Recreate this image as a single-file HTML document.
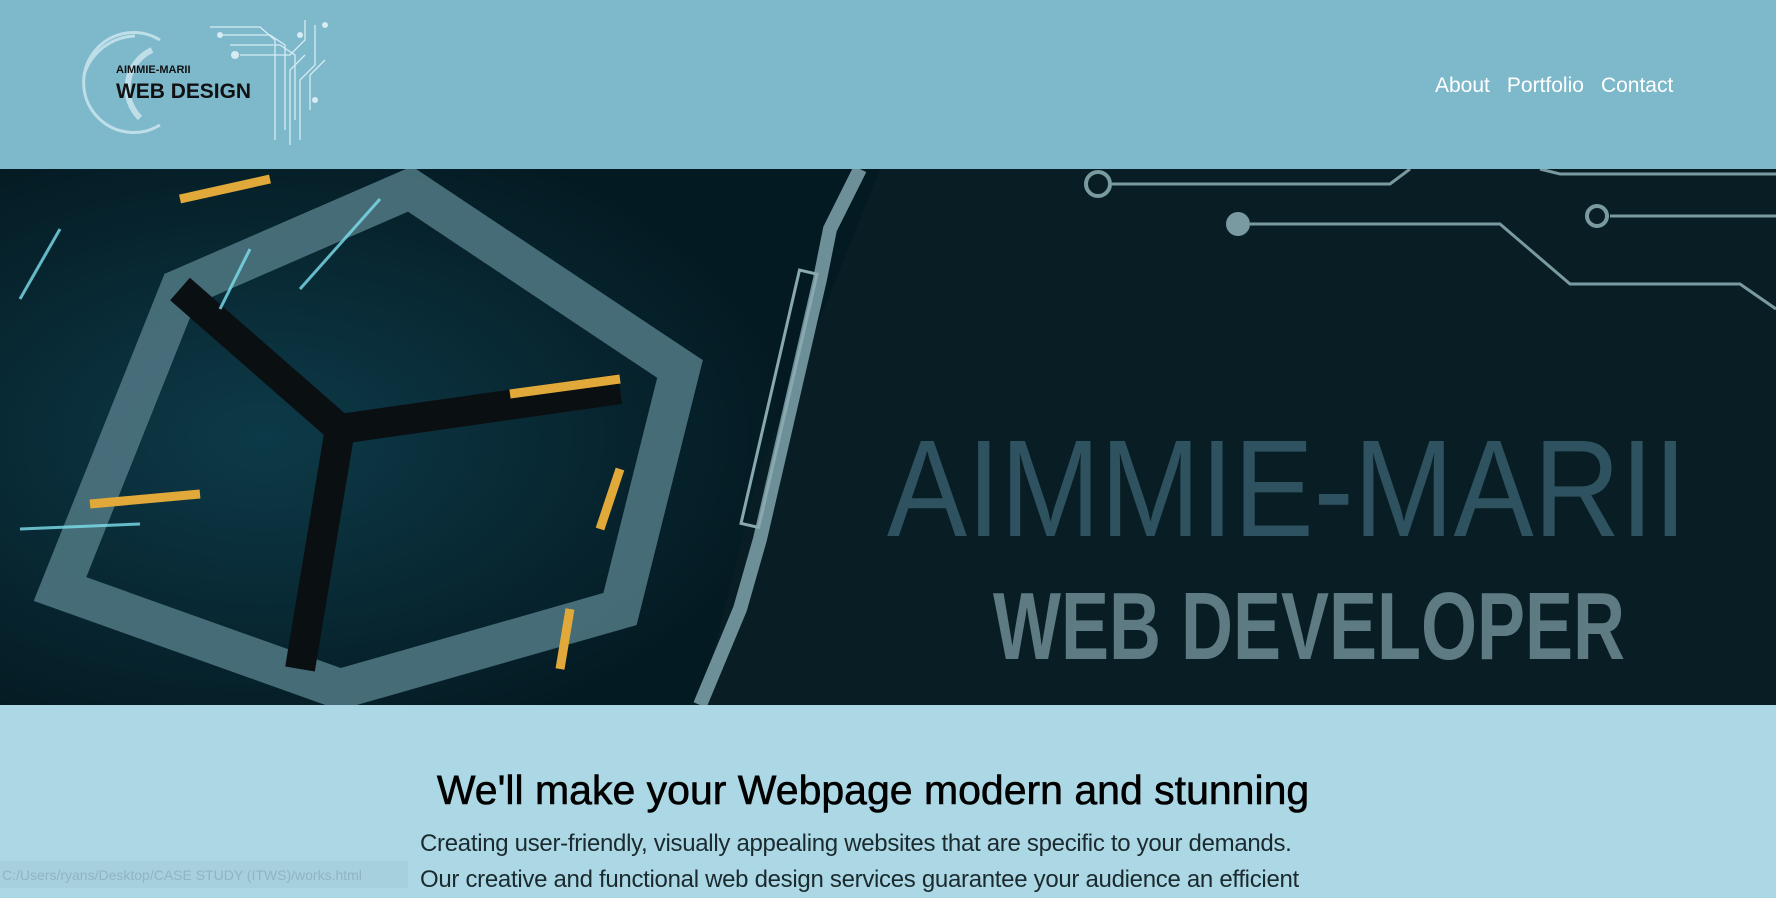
<!DOCTYPE html>
<html><head><meta charset="utf-8"><style>
*{margin:0;padding:0;box-sizing:border-box}
body{width:1776px;height:888px;overflow:hidden;background:#acd8e5;font-family:"Liberation Sans",sans-serif}
header{height:169px;background:#7db8cb;position:relative}
nav{position:absolute;top:74px;left:1435px;font-size:21px;color:#fff}
nav span{margin-right:17px}
.hero{position:absolute;top:169px;left:0;width:1776px;height:536px;background:#061c22;overflow:hidden}
h1{position:absolute;top:767px;left:0;width:1776px;text-align:center;padding-right:30px;font-size:41px;font-weight:normal;color:#000;-webkit-text-stroke:0.6px #000}
.p{position:absolute;left:420px;top:826px;font-size:24px;color:#1a2a2e;line-height:36px;letter-spacing:-0.3px}
.status{position:absolute;left:0;top:861px;width:408px;height:27px;background:#a6d0dc;color:#8fb5c2;font-size:14px;padding:6px 2px}
</style></head><body>
<header>
<svg width="330" height="169" style="position:absolute;left:60px;top:0">
<g fill="none" stroke="#cfe8f0" stroke-width="3" opacity=".8">
<path d="M100 40 A50 50 0 1 0 100 125"/>
<path d="M92 50 A42 42 0 0 0 80 118" stroke-width="6"/>
<path d="M75 36 A55 55 0 0 0 24 75"/>
</g>
<g stroke="#d6ecf2" stroke-width="1.3" fill="none">
<path d="M150 27 H200 L215 40 V140"/><path d="M160 35 H210 L225 45 V130"/><path d="M170 45 H220 L235 55 V120"/>
<path d="M180 55 H230 L245 40 V20"/><path d="M240 140 V80 L255 65 V25"/><path d="M250 110 V75 L265 60"/>
<path d="M230 145 V70 L245 55"/></g>
<g fill="#d6ecf2"><circle cx="160" cy="35" r="3"/><circle cx="175" cy="55" r="4"/><circle cx="265" cy="25" r="3"/><circle cx="255" cy="100" r="3"/><circle cx="240" cy="35" r="3"/></g>
<text x="56" y="73" font-family="Liberation Sans" font-weight="bold" font-size="11" fill="#111">AIMMIE-MARII</text>
<text x="56" y="98" font-family="Liberation Sans" font-weight="bold" font-size="21" fill="#111" textLength="135" lengthAdjust="spacingAndGlyphs">WEB DESIGN</text>
</svg>
<nav><span>About</span><span>Portfolio</span><span>Contact</span></nav>
</header>
<div class="hero">
<svg width="1776" height="536">
<defs>
<radialGradient id="g1" cx="0.3" cy="0.5" r="0.6"><stop offset="0" stop-color="#0d3a48"/><stop offset="1" stop-color="#041a22"/></radialGradient>
</defs>
<rect width="1776" height="536" fill="#081e24"/>
<polygon points="0,0 880,0 760,300 700,536 0,536" fill="url(#g1)"/>
<g fill="none" stroke="#4d7480" stroke-width="40" opacity=".9">
<polygon points="180,120 410,20 680,200 620,440 340,520 60,420"/>
</g>
<g fill="none" stroke="#0a0f12" stroke-width="30"><path d="M180 120 L340 260 L620 220"/><path d="M340 260 L300 500"/></g>
<g stroke="#e0a93a" stroke-width="9"><path d="M510 225 L620 210"/><path d="M90 335 L200 325"/><path d="M620 300 L600 360"/><path d="M180 30 L270 10"/><path d="M570 440 L560 500"/></g>
<g stroke="#7ee0ee" stroke-width="3" opacity=".8"><path d="M20 360 L140 355"/><path d="M300 120 L380 30"/><path d="M20 130 L60 60"/><path d="M220 140 L250 80"/></g>
<path d="M860 0 L830 60 L820 110 L760 370 L740 440 L700 536" stroke="#6c8f98" stroke-width="14" fill="none"/>
<rect x="770" y="100" width="18" height="260" fill="none" stroke="#8aa8b0" stroke-width="3" transform="rotate(13 780 230)"/>
<g stroke="#7a9aa2" stroke-width="3" fill="none"><path d="M1110 15 H1390 L1410 0"/><path d="M1250 55 H1500 L1570 115 H1740 L1776 140"/><path d="M1610 47 H1776"/><path d="M1540 0 L1560 5 H1776"/></g>
<g fill="none" stroke="#7a9aa2" stroke-width="4"><circle cx="1098" cy="15" r="12"/><circle cx="1597" cy="47" r="10"/></g>
<circle cx="1238" cy="55" r="12" fill="#7a9aa2"/>
<text x="887" y="367" font-family="Liberation Sans" font-size="138" fill="#2e5260" textLength="800" lengthAdjust="spacingAndGlyphs">AIMMIE-MARII</text>
<text x="993" y="490" font-family="Liberation Sans" font-weight="bold" font-size="96" fill="#5e7a82" textLength="632" lengthAdjust="spacingAndGlyphs">WEB DEVELOPER</text>
</svg>
</div>
<h1>We'll make your Webpage modern and stunning</h1>
<div class="p">Creating user-friendly, visually appealing websites that are specific to your demands.<br>Our creative and functional web design services guarantee your audience an efficient</div>
<div class="status">C:/Users/ryans/Desktop/CASE STUDY (ITWS)/works.html</div>
</body></html>
